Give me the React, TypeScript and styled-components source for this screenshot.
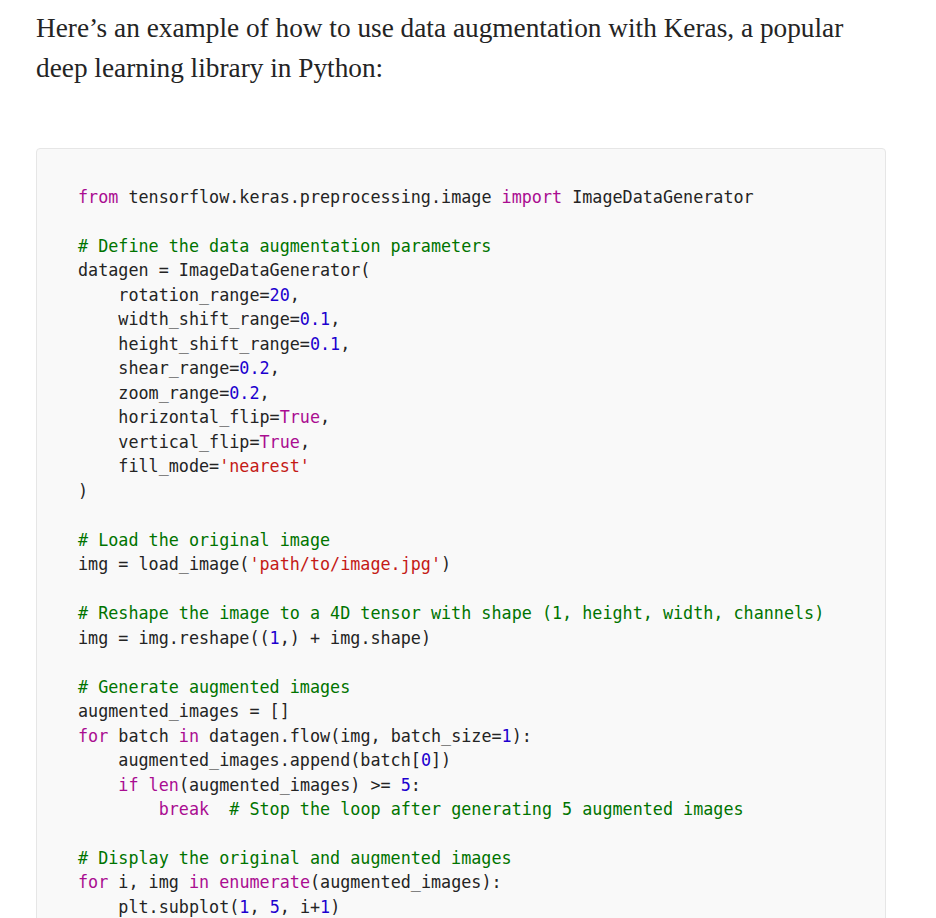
import React from "react";
import styled, { createGlobalStyle } from "styled-components";

const GlobalStyle = createGlobalStyle`
  html, body {
    margin: 0;
    padding: 0;
    background: #ffffff;
  }
`;

const Page = styled.main`
  width: 850px;
  padding: 8px 0 0 36px;
  box-sizing: content-box;
`;

const Paragraph = styled.p`
  margin: 0;
  font-family: "Liberation Serif", "DejaVu Serif", serif;
  font-size: 27.3px;
  line-height: 40px;
  color: #242424;
`;

const CodeBlock = styled.pre`
  margin: 60px 0 0 0;
  padding: 36px 40px 40px 41px;
  background: #f9f9f9;
  border: 1px solid #e6e6e6;
  border-radius: 4px;
  overflow: hidden;
  font-family: "DejaVu Sans Mono", "Liberation Mono", monospace;
  font-size: 16.75px;
  line-height: 24.48px;
  color: #242424;
`;

const Line = styled.div`
  white-space: pre;
  min-height: 24.48px;
`;

type Kind = "kw" | "num" | "str" | "com" | "txt";

const colors: Record<Kind, string> = {
  kw: "#aa0d91",
  num: "#1c00cf",
  str: "#c41a16",
  com: "#007400",
  txt: "#242424",
};

const Token = styled.span<{ $kind: Kind }>`
  color: ${(p) => colors[p.$kind]};
`;

type Tok = [Kind, string];

const code: Tok[][] = [
  [["kw", "from"], ["txt", " tensorflow.keras.preprocessing.image "], ["kw", "import"], ["txt", " ImageDataGenerator"]],
  [],
  [["com", "# Define the data augmentation parameters"]],
  [["txt", "datagen = ImageDataGenerator("]],
  [["txt", "    rotation_range="], ["num", "20"], ["txt", ","]],
  [["txt", "    width_shift_range="], ["num", "0.1"], ["txt", ","]],
  [["txt", "    height_shift_range="], ["num", "0.1"], ["txt", ","]],
  [["txt", "    shear_range="], ["num", "0.2"], ["txt", ","]],
  [["txt", "    zoom_range="], ["num", "0.2"], ["txt", ","]],
  [["txt", "    horizontal_flip="], ["kw", "True"], ["txt", ","]],
  [["txt", "    vertical_flip="], ["kw", "True"], ["txt", ","]],
  [["txt", "    fill_mode="], ["str", "'nearest'"]],
  [["txt", ")"]],
  [],
  [["com", "# Load the original image"]],
  [["txt", "img = load_image("], ["str", "'path/to/image.jpg'"], ["txt", ")"]],
  [],
  [["com", "# Reshape the image to a 4D tensor with shape (1, height, width, channels)"]],
  [["txt", "img = img.reshape(("], ["num", "1"], ["txt", ",) + img.shape)"]],
  [],
  [["com", "# Generate augmented images"]],
  [["txt", "augmented_images = []"]],
  [["kw", "for"], ["txt", " batch "], ["kw", "in"], ["txt", " datagen.flow(img, batch_size="], ["num", "1"], ["txt", "):"]],
  [["txt", "    augmented_images.append(batch["], ["num", "0"], ["txt", "])"]],
  [["txt", "    "], ["kw", "if"], ["txt", " "], ["kw", "len"], ["txt", "(augmented_images) >= "], ["num", "5"], ["txt", ":"]],
  [["txt", "        "], ["kw", "break"], ["txt", "  "], ["com", "# Stop the loop after generating 5 augmented images"]],
  [],
  [["com", "# Display the original and augmented images"]],
  [["kw", "for"], ["txt", " i, img "], ["kw", "in"], ["txt", " "], ["kw", "enumerate"], ["txt", "(augmented_images):"]],
  [["txt", "    plt.subplot("], ["num", "1"], ["txt", ", "], ["num", "5"], ["txt", ", i+"], ["num", "1"], ["txt", ")"]],
];

export default function App() {
  return (
    <>
      <GlobalStyle />
      <Page>
        <Paragraph>
          Here’s an example of how to use data augmentation with Keras, a popular
          <br />
          deep learning library in Python:
        </Paragraph>
        <CodeBlock>
          {code.map((line, i) => (
            <Line key={i}>
              {line.map(([kind, text], j) => (
                <Token key={j} $kind={kind}>
                  {text}
                </Token>
              ))}
            </Line>
          ))}
        </CodeBlock>
      </Page>
    </>
  );
}
